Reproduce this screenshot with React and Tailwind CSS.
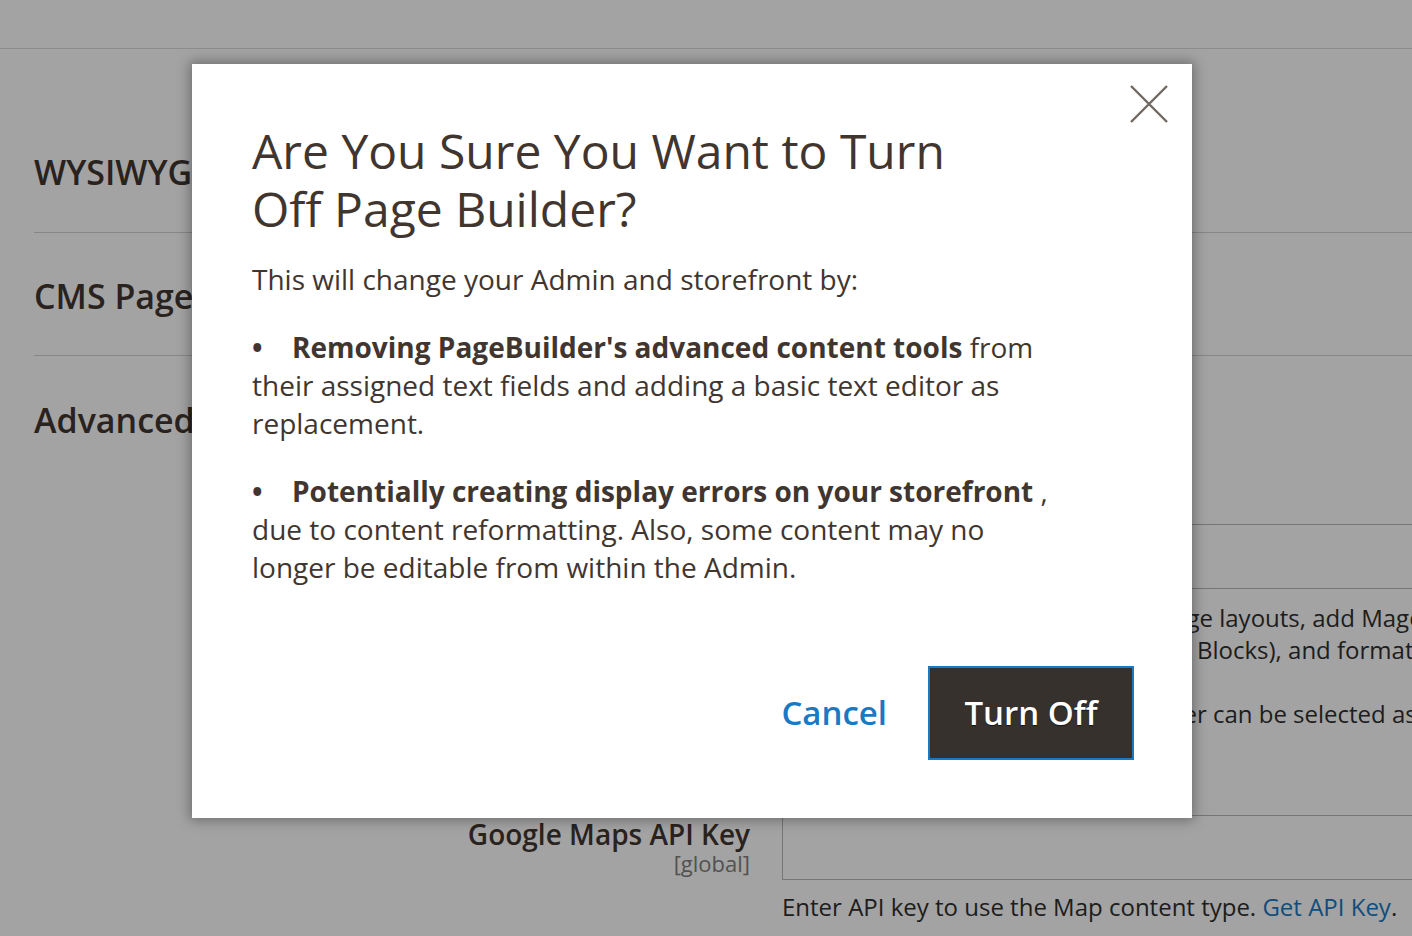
import React from 'react';

function CloseIcon() {
  return (
    <svg width="40" height="40" viewBox="0 0 40 40" fill="none">
      <path d="M2 2L38 38M38 2L2 38" stroke="#706863" strokeWidth="2.4" />
    </svg>
  );
}

export default function App() {
  return (
    <div className="relative w-[1412px] h-[936px] overflow-hidden bg-white font-['Open_Sans',sans-serif] text-[#41362f]">
      {/* Page behind the modal */}
      <div className="h-[49px] border-b border-[#dcdcdc]"></div>
      <div className="pl-[34px]">
        <div className="h-[184px] border-b border-[#d4d4d4] flex items-end pb-[40px]">
          <h2 className="text-[34px] font-semibold leading-[40px] whitespace-nowrap">WYSIWYG Options</h2>
        </div>
        <div className="h-[123px] border-b border-[#d4d4d4] flex items-center pt-[4px]">
          <h2 className="text-[34px] font-semibold leading-[40px] whitespace-nowrap">CMS Page Settings</h2>
        </div>
        <div className="pt-[44px]">
          <h2 className="text-[34px] font-semibold leading-[40px] whitespace-nowrap">Advanced Content Tools</h2>

          {/* Enable Page Builder row */}
          <div className="flex gap-[32px] mt-[84px]">
            <div className="w-[716px] shrink-0 text-right text-[28px] font-semibold leading-[38px] pt-[12px]">Enable Page Builder</div>
            <div className="w-[760px] shrink-0">
              <div className="h-[65px] border border-[#b9b9b9] px-[16px] flex items-center text-[24px]">Yes</div>
              <div className="mt-[13px] text-[24px] leading-[32px] text-[#303030] whitespace-nowrap">
                <p>Use Page Builder to build custom page layouts, add Magento content</p>
                <p>images, text, content (Products, CMS Blocks), and format text.</p>
                <p className="mt-[32px]">When off, the old default Page Builder can be selected as the editor.</p>
              </div>
            </div>
          </div>

          {/* Google Maps API Key row */}
          <div className="flex gap-[32px] mt-[85px]">
            <div className="w-[716px] shrink-0 text-right">
              <div className="text-[28px] font-semibold leading-[38px]">Google Maps API Key</div>
              <div className="text-[22px] leading-[20px] text-[#808080]">[global]</div>
            </div>
            <div className="w-[760px] shrink-0">
              <div className="h-[65px] border border-[#b9b9b9]"></div>
              <p className="mt-[11px] text-[24px] leading-[32px] text-[#303030] whitespace-nowrap">
                Enter API key to use the Map content type. <span className="text-[#1979c3]">Get API Key</span>.
              </p>
            </div>
          </div>
        </div>
      </div>

      {/* Overlay */}
      <div className="absolute inset-0 bg-[rgba(0,0,0,0.36)]"></div>

      {/* Modal */}
      <div className="absolute left-[192px] top-[64px] w-[1000px] h-[754px] bg-white shadow-[0_0_12px_2px_rgba(0,0,0,0.35)] flex flex-col pl-[60px] pr-[58px] pt-[58px] pb-[58px]">
        <button className="absolute right-[23px] top-[20px] w-[40px] h-[40px]">
          <CloseIcon />
        </button>

        <h1 className="w-[720px] text-[48px] leading-[1.2] font-normal">
          Are You Sure You Want to Turn Off Page Builder?
        </h1>

        <div className="w-[800px] text-[28px] leading-[38px] mt-[23px]">
          <p>This will change your Admin and storefront by:</p>
          <ul className="mt-[30px]">
            <li>
              <span className="inline-block w-[40px] font-bold">•</span>
              <strong className="font-bold">Removing PageBuilder's advanced content tools</strong> from their assigned text
              fields and adding a basic text editor as replacement.
            </li>
            <li className="mt-[30px]">
              <span className="inline-block w-[40px] font-bold">•</span>
              <strong className="font-bold">Potentially creating display errors on your storefront</strong> , due to content
              reformatting. Also, some content may no longer be editable from within the Admin.
            </li>
          </ul>
        </div>

        <div className="mt-auto flex items-center justify-end gap-[41px]">
          <button className="text-[33px] font-semibold text-[#1979c3] leading-[40px]">Cancel</button>
          <button className="w-[206px] h-[94px] bg-[#36312d] border-2 border-[#1979c3] text-white text-[33px] font-semibold [text-shadow:0_1px_1px_rgba(0,0,0,0.6)]">
            Turn Off
          </button>
        </div>
      </div>
    </div>
  );
}
